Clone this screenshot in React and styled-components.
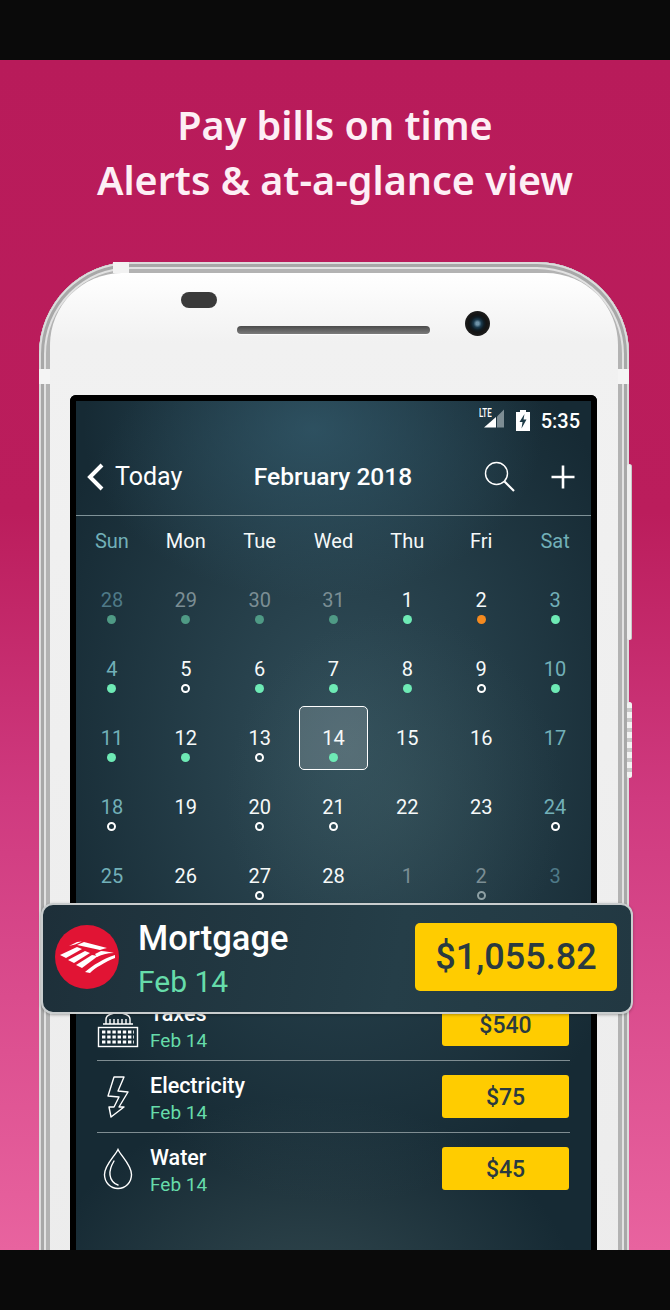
import React from "react";
import styled, { createGlobalStyle } from "styled-components";

const GlobalStyle = createGlobalStyle`
  html, body { margin: 0; padding: 0; background: #0a0a0a; }
  body { font-family: Roboto, "Liberation Sans", sans-serif; }
`;

const weekdays = [
  { name: "Sun", weekend: true },
  { name: "Mon" },
  { name: "Tue" },
  { name: "Wed" },
  { name: "Thu" },
  { name: "Fri" },
  { name: "Sat", weekend: true },
];

// tone: muted = other month, mutedEnd = other month weekend, weekend = teal, default = white
const days = [
  { n: 28, tone: "mutedEnd", dot: "dim" },
  { n: 29, tone: "muted", dot: "dim" },
  { n: 30, tone: "muted", dot: "dim" },
  { n: 31, tone: "muted", dot: "dim" },
  { n: 1, dot: "green" },
  { n: 2, dot: "orange" },
  { n: 3, tone: "weekend", dot: "green" },
  { n: 4, tone: "weekend", dot: "green" },
  { n: 5, dot: "ring" },
  { n: 6, dot: "green" },
  { n: 7, dot: "green" },
  { n: 8, dot: "green" },
  { n: 9, dot: "ring" },
  { n: 10, tone: "weekend", dot: "green" },
  { n: 11, tone: "weekend", dot: "green" },
  { n: 12, dot: "green" },
  { n: 13, dot: "ring" },
  { n: 14, dot: "green", selected: true },
  { n: 15 },
  { n: 16 },
  { n: 17, tone: "weekend" },
  { n: 18, tone: "weekend", dot: "ring" },
  { n: 19 },
  { n: 20, dot: "ring" },
  { n: 21, dot: "ring" },
  { n: 22 },
  { n: 23 },
  { n: 24, tone: "weekend", dot: "ring" },
  { n: 25, tone: "weekend" },
  { n: 26 },
  { n: 27, dot: "ring" },
  { n: 28 },
  { n: 1, tone: "muted" },
  { n: 2, tone: "muted", dot: "dimRing" },
  { n: 3, tone: "mutedEnd" },
];

const SearchIcon = () => (
  <svg width="32" height="32" viewBox="0 0 32 32" fill="none" stroke="#fff">
    <circle cx="12.5" cy="12.5" r="11" strokeWidth="1.4" />
    <path d="M20.5 20.5L30 30" strokeWidth="2.2" />
  </svg>
);

const PlusIcon = () => (
  <svg width="24" height="24" viewBox="0 0 24 24" stroke="#fff" strokeWidth="2.6">
    <path d="M12 0.5V23.5M0.5 12H23.5" />
  </svg>
);

const BackIcon = () => (
  <svg width="18" height="28" viewBox="0 0 18 28" fill="none" stroke="#fff" strokeWidth="4">
    <path d="M16 2L4 14L16 26" />
  </svg>
);

const SignalIcon = () => (
  <svg width="26" height="24" viewBox="0 0 26 24">
    <path d="M18 7.5L25 0.5V18.5H18Z" fill="#7d8d94" />
    <path d="M17 8V18.5H5Z" fill="#fff" />
  </svg>
);

const BatteryIcon = () => (
  <svg width="14" height="21" viewBox="0 0 14 21">
    <path d="M4 0H10V2H14V21H0V2H4Z" fill="#fff" />
    <path d="M8.5 4L3.5 12H6.5L5.5 18.5L10.5 9.5H7.5Z" fill="#1d3a46" />
  </svg>
);

const BankLogo = () => (
  <svg width="64" height="64" viewBox="0 0 64 64">
    <circle cx="32" cy="32" r="32" fill="#e11434" />
    <g fill="#fff">
      <path d="M5 30L22 22L27 24L11 33Z" />
      <path d="M13 35L30 26L35 28L19 38Z" />
      <path d="M21 40L37 30L43 31L27 43Z" />
      <path d="M30 47C38 40 48 34 60 30L60 33C50 37 40 43 35 48Z" />
      <path d="M40 29L46 26C50 26 55 27 59 28C52 28 46 30 42 32Z" />
      <path d="M22 20L29 17L52 23C49 24 47 24 45 25Z" />
      <path d="M14 21L22 17L27 16.5L20 19.5Z" />
    </g>
  </svg>
);

const TaxesIcon = () => (
  <svg width="42" height="46" viewBox="0 0 42 46" fill="none" stroke="#fff" strokeWidth="1.4">
    <path d="M9 17C9 9 33 9 33 17V22M9 17V22M6 22H36" />
    <path d="M13 17V22M17 17V22M21 17V22M25 17V22M29 17V22" />
    <rect x="1.5" y="25.5" width="39" height="19" />
    <path d="M5 30H37M5 35H37M5 40H37" strokeWidth="3" strokeDasharray="3.4 1.8" />
  </svg>
);

const BoltIcon = () => (
  <svg width="24" height="42" viewBox="0 0 24 42" fill="none" stroke="#fff" strokeWidth="1.4" strokeLinejoin="round">
    <path d="M8 1H18L12 15L22 16L13 31H18L5 41L3 31H8L13 21L2 20Z" />
  </svg>
);

const DropIcon = () => (
  <svg width="30" height="42" viewBox="0 0 30 42" fill="none" stroke="#fff" strokeWidth="1.4">
    <path d="M15 1.5C12 8 1.5 17 1.5 26.5C1.5 34.5 7.5 40.5 15 40.5C22.5 40.5 28.5 34.5 28.5 26.5C28.5 17 18 8 15 1.5Z" />
    <path d="M11 13C8 18 6.5 23 7 27C7.5 32 11 36 15 37" strokeLinecap="round" />
  </svg>
);

const bills = [
  { name: "Taxes", date: "Feb 14", amount: "$540", icon: <TaxesIcon /> },
  { name: "Electricity", date: "Feb 14", amount: "$75", icon: <BoltIcon /> },
  { name: "Water", date: "Feb 14", amount: "$45", icon: <DropIcon /> },
];

const App = () => {
  return (
    <Wrapper>
      <GlobalStyle />
      <BlackBar />
      <Stage>
        <Headline>
          Pay bills on time
          <br />
          Alerts &amp; at-a-glance view
        </Headline>
        <Phone>
          <TopTab />
          <SideTab $side="left" />
          <SideTab $side="right" />
          <VolumeKey />
          <PowerKey />
          <Body>
            <SensorRow>
              <Sensor />
              <Speaker />
              <Camera />
            </SensorRow>
            <Screen>
              <StatusBar>
                <LteWrap>
                  <Lte>LTE</Lte>
                  <SignalIcon />
                </LteWrap>
                <BatteryIcon />
                <Clock>5:35</Clock>
              </StatusBar>
              <Header>
                <BackLink>
                  <BackIcon />
                  <span>Today</span>
                </BackLink>
                <Month>February 2018</Month>
                <HeaderActions>
                  <SearchIcon />
                  <PlusIcon />
                </HeaderActions>
              </Header>
              <WeekRow>
                {weekdays.map((d) => (
                  <WeekDay key={d.name} $weekend={d.weekend}>
                    {d.name}
                  </WeekDay>
                ))}
              </WeekRow>
              <CalendarGrid>
                {days.map((d, i) => (
                  <Day key={i} $tone={d.tone} $selected={d.selected}>
                    <span>{d.n}</span>
                    {d.dot && <Dot $kind={d.dot} />}
                  </Day>
                ))}
              </CalendarGrid>
              <BillList>
                {bills.map((b) => (
                  <BillRow key={b.name}>
                    <BillIcon>{b.icon}</BillIcon>
                    <BillText>
                      <BillName>{b.name}</BillName>
                      <BillDate>{b.date}</BillDate>
                    </BillText>
                    <Amount>{b.amount}</Amount>
                  </BillRow>
                ))}
              </BillList>
            </Screen>
          </Body>
          <Callout>
            <BankLogo />
            <CalloutText>
              <CalloutName>Mortgage</CalloutName>
              <CalloutDate>Feb 14</CalloutDate>
            </CalloutText>
            <CalloutAmount>$1,055.82</CalloutAmount>
          </Callout>
        </Phone>
      </Stage>
      <BlackBar />
    </Wrapper>
  );
};

export default App;

const Wrapper = styled.div`
  width: 670px;
  height: 1310px;
  display: flex;
  flex-direction: column;
  overflow: hidden;
`;

const BlackBar = styled.div`
  height: 60px;
  flex: none;
  background: #0a0a0a;
`;

const Stage = styled.div`
  height: 1190px;
  flex: none;
  overflow: hidden;
  box-sizing: border-box;
  padding: 38px 0 0 39px;
  background: linear-gradient(180deg, #b81b5a 0%, #bb1d5c 38%, #cf3a7f 62%, #e8639f 100%);
`;

const Headline = styled.h1`
  margin: 0 0 54px -39px;
  font-family: "Noto Sans", "Open Sans", sans-serif;
  font-size: 39.5px;
  font-weight: 600;
  line-height: 55px;
  color: #fdeff5;
  text-align: center;
`;

const Phone = styled.div`
  position: relative;
  width: 590px;
  height: 1100px;
  box-sizing: border-box;
  padding: 11px;
  border-radius: 92px 92px 0 0;
  background: #e6e6e6;
  box-shadow:
    inset 0 0 0 2px #dcdcdc,
    inset 0 0 0 5px #a8a8a8,
    inset 0 0 0 7px #e2e2e2,
    inset 0 0 0 11px #b3b3b3;
`;

const TopTab = styled.div`
  position: absolute;
  top: 0;
  left: 74px;
  width: 16px;
  height: 11px;
  background: #f2f2f2;
`;

const SideTab = styled.div`
  position: absolute;
  top: 107px;
  ${(p) => (p.$side === "left" ? "left: 0;" : "right: 0;")}
  width: 11px;
  height: 15px;
  background: #f4f4f4;
`;

const VolumeKey = styled.div`
  position: absolute;
  top: 202px;
  right: -3px;
  width: 5px;
  height: 176px;
  border-radius: 3px;
  box-sizing: border-box;
  background: #efefef;
  border-right: 1px solid #c8c8c8;
`;

const PowerKey = styled.div`
  position: absolute;
  top: 440px;
  right: -3px;
  width: 5px;
  height: 76px;
  border-radius: 3px;
  background: repeating-linear-gradient(180deg, #f2f2f2 0 6px, #c9c9c9 6px 10px);
`;

const Body = styled.div`
  height: 100%;
  box-sizing: border-box;
  padding: 0 21px 0 20px;
  border-radius: 72px 72px 0 0;
  background: linear-gradient(180deg, #ffffff 0, #f1f1f1 70px, #ececec 100%);
`;

const SensorRow = styled.div`
  position: relative;
  height: 122px;
`;

const Sensor = styled.div`
  position: absolute;
  left: 111px;
  top: 19px;
  width: 36px;
  height: 16px;
  border-radius: 8px;
  background: #3a3a3a;
`;

const Speaker = styled.div`
  position: absolute;
  left: 167px;
  top: 53px;
  width: 193px;
  height: 8px;
  border-radius: 4px;
  background: linear-gradient(180deg, #4a4a4a, #7c7c7c);
  box-shadow: 0 1px 1px #fff;
`;

const Camera = styled.div`
  position: absolute;
  left: 395px;
  top: 38px;
  width: 25px;
  height: 25px;
  border-radius: 50%;
  background: radial-gradient(circle at 50% 50%, #6f93a8 0 1.5px, #1c3b4e 4px, #0f1c24 6.5px, #141414 9px, #2a2a2a 100%);
`;

const Screen = styled.div`
  width: 527px;
  height: 960px;
  box-sizing: border-box;
  border: 6px solid #000;
  border-bottom: 0;
  border-radius: 6px 6px 0 0;
  color: #fff;
  background:
    radial-gradient(ellipse 170px 190px at 62% 42%, rgba(72, 102, 106, 0.25), rgba(72, 102, 106, 0) 100%),
    radial-gradient(ellipse 230px 170px at 46% 3%, rgba(52, 92, 110, 0.7), rgba(52, 92, 110, 0) 100%),
    radial-gradient(ellipse 320px 460px at 52% 36%, rgba(58, 90, 102, 0.75), rgba(58, 90, 102, 0) 100%),
    radial-gradient(ellipse 280px 240px at 45% 98%, rgba(72, 96, 100, 0.6), rgba(72, 96, 100, 0) 100%),
    #162a34;
`;

const StatusBar = styled.div`
  height: 35px;
  box-sizing: border-box;
  padding: 4px 11px 0 0;
  display: flex;
  align-items: center;
  justify-content: flex-end;
  gap: 11px;
`;

const LteWrap = styled.div`
  position: relative;
  display: flex;
  width: 26px;
  height: 24px;
`;

const Lte = styled.span`
  position: absolute;
  left: 0;
  top: -2px;
  font-size: 12.5px;
  font-weight: 500;
  line-height: 12px;
  transform: scaleX(0.64);
  transform-origin: left;
`;

const Clock = styled.span`
  font-size: 20px;
  font-weight: 500;
`;

const Header = styled.div`
  height: 80px;
  box-sizing: border-box;
  padding: 2px 16px 0 16px;
  display: grid;
  grid-template-columns: 1fr auto 1fr;
  align-items: center;
  border-bottom: 1px solid #7f9298;
`;

const BackLink = styled.div`
  display: flex;
  align-items: center;
  gap: 11px;
  margin-left: -6px;
  font-size: 25px;
`;

const Month = styled.div`
  font-size: 24.5px;
  font-weight: 500;
  transform: translateX(-0.5px);
`;

const HeaderActions = styled.div`
  display: flex;
  align-items: center;
  justify-content: flex-end;
  gap: 35px;
`;

const WeekRow = styled.div`
  height: 50px;
  margin: 0 -1px;
  display: grid;
  grid-template-columns: repeat(7, 1fr);
  align-items: center;
  box-sizing: border-box;
`;

const WeekDay = styled.div`
  text-align: center;
  font-size: 20px;
  font-weight: 400;
  color: ${(p) => (p.$weekend ? "#72b0b8" : "#f6f9f9")};
`;

const CalendarGrid = styled.div`
  margin: 0 -1px;
  display: grid;
  grid-template-columns: repeat(7, 1fr);
  grid-auto-rows: 69px;
`;

const dayColors = { muted: "#7b8e94", mutedEnd: "#4f7a88", weekend: "#72b0b8" };

const Day = styled.div`
  position: relative;
  display: flex;
  flex-direction: column;
  align-items: center;
  font-size: 20px;
  font-weight: 400;
  line-height: 24px;
  padding-top: 22px;
  box-sizing: border-box;
  color: ${(p) => dayColors[p.$tone] || "#f6f9f9"};

  ${(p) =>
    p.$selected &&
    `
    &::before {
      content: "";
      position: absolute;
      top: 2px;
      left: 2.5px;
      right: 2.5px;
      bottom: 3px;
      border: 1.5px solid #fff;
      border-radius: 5px;
      background: rgba(255, 255, 255, 0.17);
    }
    > * { position: relative; }
  `}
`;

const dotStyles = {
  green: "background: #6eeab5;",
  orange: "background: #f58a1f;",
  dim: "background: #4f9a85;",
  ring: "border: 2px solid #fff;",
  dimRing: "border: 2px solid #8da0a4;",
};

const Dot = styled.i`
  display: block;
  box-sizing: border-box;
  width: 9px;
  height: 9px;
  margin-top: 3px;
  border-radius: 50%;
  ${(p) => dotStyles[p.$kind]}
`;

const BillList = styled.div`
  margin: 78px 21px 0;
`;

const BillRow = styled.div`
  height: 72px;
  box-sizing: border-box;
  display: flex;
  align-items: center;
  padding: 0 1px 0 0;
  border-bottom: 1.5px solid #7f8d92;

  &:last-child {
    border-bottom-color: transparent;
  }
`;

const BillIcon = styled.div`
  width: 53px;
  display: flex;
  justify-content: center;
  padding-right: 11px;
  box-sizing: border-box;
`;

const BillText = styled.div`
  flex: 1;
  padding-top: 4px;
`;

const BillName = styled.div`
  font-size: 21.5px;
  font-weight: 500;
  line-height: 27px;
`;

const BillDate = styled.div`
  font-size: 19px;
  line-height: 27px;
  color: #66dcaa;
`;

const Amount = styled.div`
  width: 127px;
  height: 43px;
  box-sizing: border-box;
  padding-top: 2px;
  display: flex;
  align-items: center;
  justify-content: center;
  border-radius: 3px;
  background: #ffcc00;
  color: #2a3a40;
  font-size: 23px;
  font-weight: 500;
`;

const Callout = styled.div`
  position: absolute;
  top: 641px;
  left: 2px;
  width: 592px;
  height: 111px;
  box-sizing: border-box;
  padding: 0 14px 3px 12px;
  display: flex;
  align-items: center;
  border: 2px solid #c9cdce;
  border-radius: 12px;
  background: linear-gradient(100deg, #1d2f39, #253e48 60%, #223842);
  box-shadow: 0 1px 3px rgba(0, 0, 0, 0.3);
  color: #fff;
`;

const CalloutText = styled.div`
  flex: 1;
  margin-left: 19px;
  padding-top: 4px;
`;

const CalloutName = styled.div`
  font-size: 34.5px;
  font-weight: 500;
  line-height: 43px;
`;

const CalloutDate = styled.div`
  margin-top: 2px;
  font-size: 30px;
  line-height: 40px;
  color: #66dcaa;
`;

const CalloutAmount = styled.div`
  width: 202px;
  height: 68px;
  display: flex;
  align-items: center;
  justify-content: center;
  border-radius: 5px;
  background: #ffcc00;
  color: #2a3a40;
  font-size: 36px;
  font-weight: 500;
`;
